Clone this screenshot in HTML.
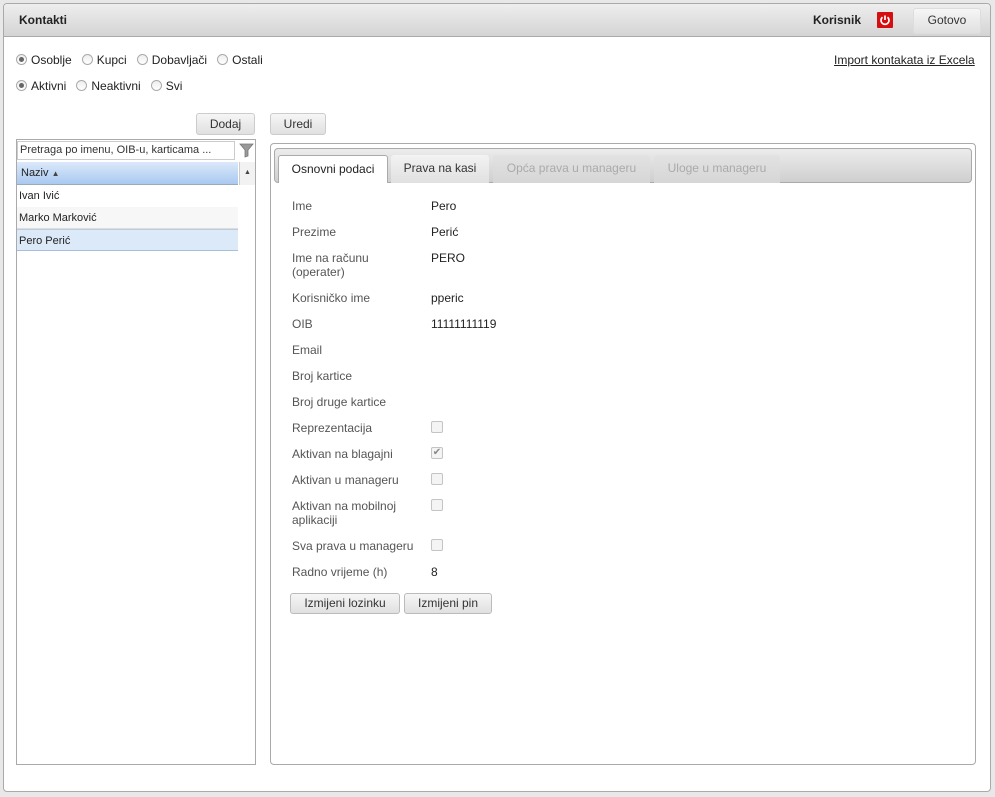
<!DOCTYPE html>
<html><head><meta charset="utf-8"><style>
*{box-sizing:border-box;margin:0;padding:0}
body{width:995px;height:797px;background:#e8e8e8;font-family:"Liberation Sans",Arial,sans-serif;font-size:12px;color:#222;position:relative;overflow:hidden}
.a{position:absolute}
.panel{left:3px;top:3px;width:988px;height:789px;background:#fff;border:1px solid #aaa;border-radius:4px}
.hdr{left:4px;top:4px;width:986px;height:33px;background:linear-gradient(#eee,#d4d4d4);border-bottom:1px solid #aaa;border-radius:3px 3px 0 0}
.btn{background:linear-gradient(#f6f6f6,#e0e0e0);border:1px solid #ccc;border-radius:3px;text-align:center;color:#333;font-size:12px}
.rad{display:inline-block;width:11px;height:11px;border:1px solid #aaa;border-radius:50%;background:linear-gradient(#eee,#fff);vertical-align:-1px;margin-right:4px;position:relative}
.rad.on:after{content:"";position:absolute;left:2px;top:2px;width:5px;height:5px;border-radius:50%;background:#666}
.lbl{color:#555;left:292px;font-size:12px;line-height:14px}
.val{left:431px;color:#222;font-size:12px}
.cb{left:431px;width:12px;height:12px;border:1px solid #c4c4c4;border-radius:2px;background:#f4f4f4}
.tab{top:155px;height:28px;line-height:26px;text-align:center;border-radius:3px 3px 0 0;font-size:12px}
</style></head><body>
<div class="a panel"></div>
<div class="a hdr"></div>
<div class="a" style="left:19px;top:13px;font-weight:bold;font-size:12px;color:#222">Kontakti</div>
<div class="a" style="left:813px;top:13px;font-weight:bold;font-size:12px;color:#222">Korisnik</div>
<div class="a" style="left:877px;top:12px;width:16px;height:16px;background:#d50f0f;border-radius:1px">
<svg width="16" height="16" viewBox="0 0 16 16"><path d="M5.5 5.2A4 4 0 1 0 10.5 5.2" fill="none" stroke="#fff" stroke-width="1.7"/><path d="M8 3.5V8" stroke="#fff" stroke-width="1.7"/></svg></div>
<div class="a btn" style="left:913px;top:8px;width:68px;height:26px;line-height:22px;border-color:#ddd">Gotovo</div>
<div class="a" style="left:16px;top:53px;line-height:14px"><span class="rad on"></span>Osoblje&nbsp;&nbsp; <span class="rad"></span>Kupci&nbsp;&nbsp; <span class="rad"></span>Dobavljači&nbsp;&nbsp; <span class="rad"></span>Ostali</div>
<div class="a" style="left:16px;top:79px;line-height:14px"><span class="rad on"></span>Aktivni&nbsp;&nbsp; <span class="rad"></span>Neaktivni&nbsp;&nbsp; <span class="rad"></span>Svi</div>
<div class="a" style="left:834px;top:53px;text-decoration:underline;color:#222">Import kontakata iz Excela</div>
<div class="a btn" style="left:196px;top:113px;width:59px;height:22px;line-height:20px">Dodaj</div>
<div class="a btn" style="left:270px;top:113px;width:56px;height:22px;line-height:20px">Uredi</div>
<div class="a" style="left:16px;top:139px;width:240px;height:626px;border:1px solid #aaa;background:#fff"></div>
<div class="a" style="left:17px;top:141px;width:218px;height:19px;border:1px solid #ccc;font-size:11px;line-height:17px;padding-left:2px;color:#333">Pretraga po imenu, OIB-u, karticama ...</div>
<svg class="a" style="left:239px;top:143px" width="15" height="15" viewBox="0 0 15 15"><path d="M1 1H14L9 7V13L6 14V7Z" fill="#999" stroke="#777" stroke-width=".8"/></svg>
<div class="a" style="left:17px;top:162px;width:221px;height:23px;background:linear-gradient(#dbe9fa,#a9c9f0);border-bottom:1px solid #9ab;font-size:11px;line-height:22px;padding-left:4px">Naziv <span style="font-size:8px;color:#444">&#9650;</span></div>
<div class="a" style="left:239px;top:162px;width:16px;height:23px;background:#f2f2f2;border-left:1px solid #ccc;font-size:7px;text-align:center;line-height:22px;color:#444">&#9650;</div>
<div class="a" style="left:17px;top:185px;width:221px;height:22px;line-height:22px;padding-left:2px;font-size:11px">Ivan Ivić</div>
<div class="a" style="left:17px;top:207px;width:221px;height:22px;line-height:22px;padding-left:2px;font-size:11px;background:#f7f7f7;border-bottom:1px solid #ddd">Marko Marković</div>
<div class="a" style="left:17px;top:229px;width:221px;height:22px;line-height:22px;padding-left:2px;font-size:11px;background:#dce9f9;border-bottom:1px solid #a7bfdc;border-top:1px solid #bcd">Pero Perić</div>
<div class="a" style="left:270px;top:143px;width:706px;height:622px;border:1px solid #aaa;border-radius:4px;background:#fff"></div>
<div class="a" style="left:274px;top:148px;width:698px;height:35px;background:linear-gradient(#ececec,#cfcfcf);border:1px solid #aaa;border-radius:4px"></div>
<div class="a tab" style="left:278px;width:110px;background:#fff;border:1px solid #aaa;border-bottom:none;color:#222">Osnovni podaci</div>
<div class="a tab" style="left:391px;width:98px;background:linear-gradient(#f3f3f3,#e0e0e0);color:#333">Prava na kasi</div>
<div class="a tab" style="left:493px;width:157px;background:linear-gradient(#e2e2e2,#d6d6d6);color:#aaa">Opća prava u manageru</div>
<div class="a tab" style="left:654px;width:126px;background:linear-gradient(#e2e2e2,#d6d6d6);color:#aaa">Uloge u manageru</div>
<div class="a lbl" style="top:199px">Ime</div><div class="a val" style="top:199px">Pero</div>
<div class="a lbl" style="top:225px">Prezime</div><div class="a val" style="top:225px">Perić</div>
<div class="a lbl" style="top:251px">Ime na računu<br>(operater)</div><div class="a val" style="top:251px">PERO</div>
<div class="a lbl" style="top:291px">Korisničko ime</div><div class="a val" style="top:291px">pperic</div>
<div class="a lbl" style="top:317px">OIB</div><div class="a val" style="top:317px">11111111119</div>
<div class="a lbl" style="top:343px">Email</div>
<div class="a lbl" style="top:369px">Broj kartice</div>
<div class="a lbl" style="top:395px">Broj druge kartice</div>
<div class="a lbl" style="top:421px">Reprezentacija</div><div class="a cb" style="top:421px"></div>
<div class="a lbl" style="top:447px">Aktivan na blagajni</div><div class="a cb" style="top:447px;font-size:10px;line-height:10px;color:#888;text-align:center">&#10004;</div>
<div class="a lbl" style="top:473px">Aktivan u manageru</div><div class="a cb" style="top:473px"></div>
<div class="a lbl" style="top:499px">Aktivan na mobilnoj<br>aplikaciji</div><div class="a cb" style="top:499px"></div>
<div class="a lbl" style="top:539px">Sva prava u manageru</div><div class="a cb" style="top:539px"></div>
<div class="a lbl" style="top:565px">Radno vrijeme (h)</div><div class="a val" style="top:565px">8</div>
<div class="a btn" style="left:290px;top:593px;width:110px;height:21px;line-height:19px;border-color:#bbb">Izmijeni lozinku</div>
<div class="a btn" style="left:404px;top:593px;width:88px;height:21px;line-height:19px;border-color:#bbb">Izmijeni pin</div>
</body></html>
